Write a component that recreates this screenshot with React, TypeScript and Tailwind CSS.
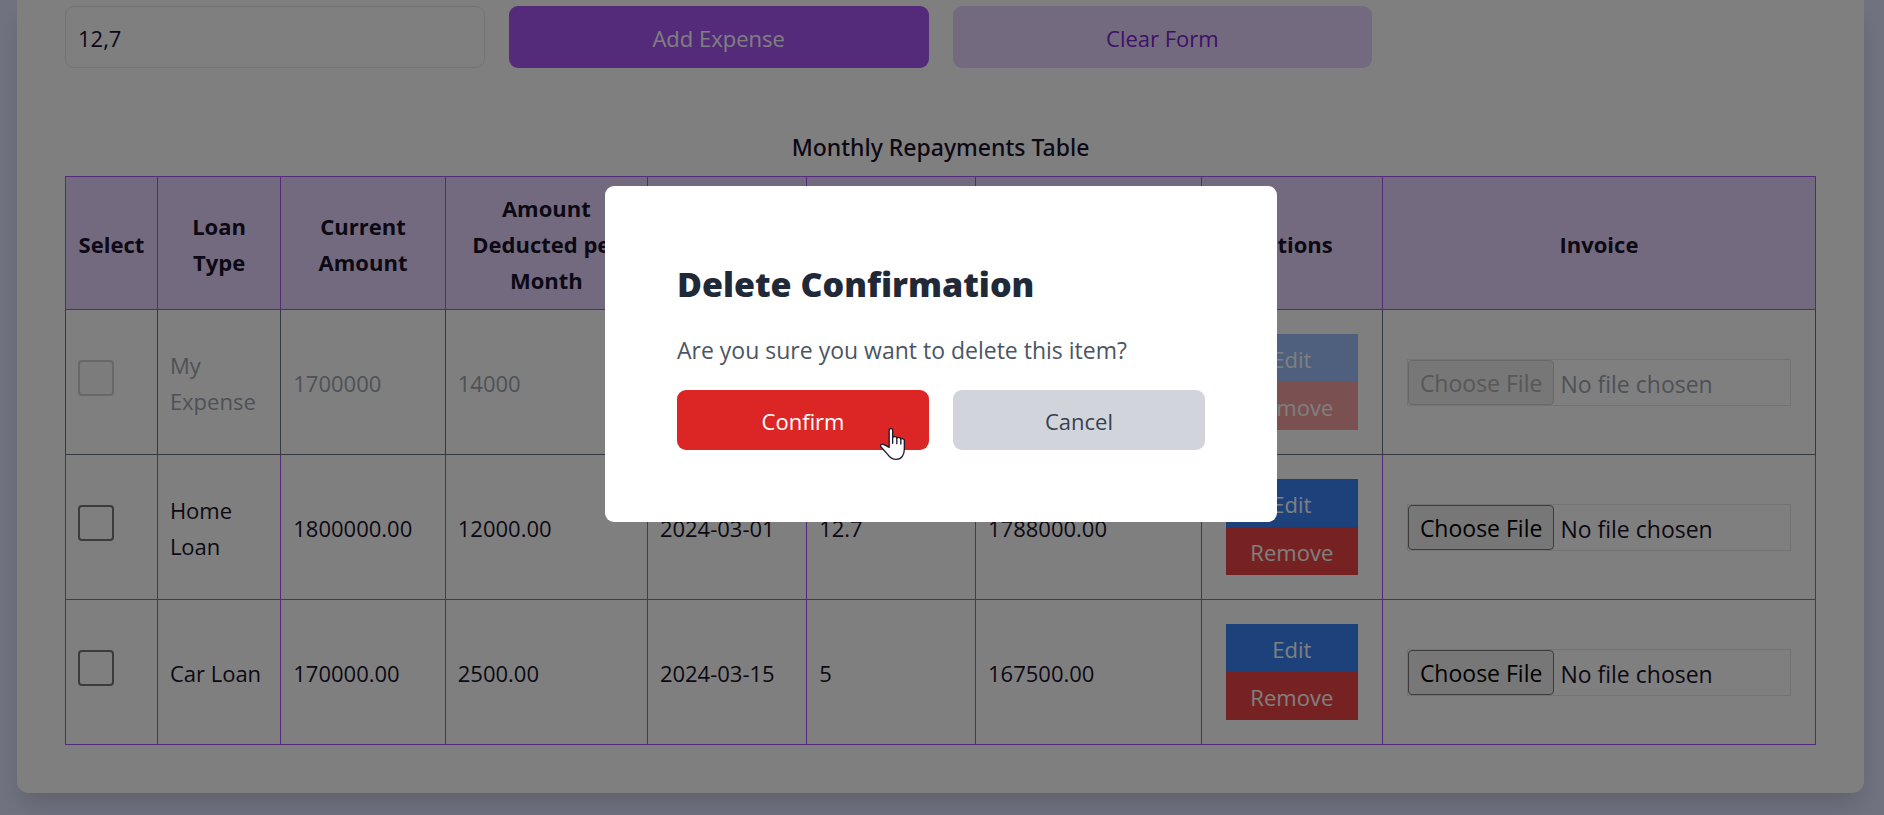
type Loan = {
  type: string;
  current: string;
  deducted: string;
  date: string;
  interest: string;
  balance: string;
  disabled?: boolean;
};

const loans: Loan[] = [
  { type: "My Expense", current: "1700000", deducted: "14000", date: "2024-03-01", interest: "12,7", balance: "1686000", disabled: true },
  { type: "Home Loan", current: "1800000.00", deducted: "12000.00", date: "2024-03-01", interest: "12.7", balance: "1788000.00" },
  { type: "Car Loan", current: "170000.00", deducted: "2500.00", date: "2024-03-15", interest: "5", balance: "167500.00" },
];

const headers = [
  "Select",
  "Loan Type",
  "Current Amount",
  "Amount Deducted per Month",
  "Date",
  "Interest Rate",
  "Balance",
  "Actions",
  "Invoice",
];

function LoanRow({ loan }: { loan: Loan }) {
  const cell = loan.disabled ? "border border-[#6b7280] px-3 pt-[2px]" : "border border-[#a855f7] px-3 pt-[2px]";
  const wide = loan.disabled ? "border border-[#6b7280] p-6" : "border border-[#a855f7] p-6";
  return (
    <tr className={loan.disabled ? "text-[#9ca3af]" : ""}>
      <td className={cell}>
        <input
          type="checkbox"
          aria-label={"Select " + loan.type}
          disabled={loan.disabled}
          className="mb-[10px] block size-9 appearance-none rounded-[4px] border-2 border-[#767676] bg-white disabled:border-[#d0d0d0] disabled:bg-[#f8f8f8]"
        />
      </td>
      <td className={cell}>{loan.type}</td>
      <td className={cell}>{loan.current}</td>
      <td className={cell}>{loan.deducted}</td>
      <td className={cell}>{loan.date}</td>
      <td className={cell}>{loan.interest}</td>
      <td className={cell}>{loan.balance}</td>
      <td className={wide}>
        <div className="flex flex-col">
          <button disabled={loan.disabled} className="h-12 bg-[#3b82f6] pt-[2px] text-white disabled:opacity-50">
            Edit
          </button>
          <button disabled={loan.disabled} className="h-12 bg-[#ef4444] pt-[2px] text-white disabled:opacity-50">
            Remove
          </button>
        </div>
      </td>
      <td className={wide}>
        <input
          type="file"
          aria-label={"Invoice for " + loan.type}
          disabled={loan.disabled}
          className="block w-full border border-[#e5e7eb] text-[23px] file:mr-[6px] file:h-[45px] file:rounded-[4px] file:border file:border-solid file:border-[#767676] file:bg-[#efefef] file:px-[11px] file:pt-[2px] file:text-black disabled:file:border-[#d0d0d0] disabled:file:text-[#b0b0b0]"
        />
      </td>
    </tr>
  );
}

function HandPointer() {
  return (
    <svg
      aria-hidden="true"
      viewBox="0 0 75 96"
      className="absolute top-[38px] right-[24px] h-8 w-[25px]"
      fill="white"
      stroke="#1a1a2a"
      strokeWidth="4"
      strokeLinejoin="round"
      strokeLinecap="round"
    >
      <path d="M27.500 58V7a5 5 0 0 1 10.500 0V28c3-4 12-3 12.500 2c3-3 11-2 12 3c4-2 10-1 10.500 4V64c0 16-8 30-24 30c-13 0-20-6-26-15L3 57c-4-6 3-11 9-7z" />
      <path d="M38 28V46M50.500 30V47M62.500 33V48" fill="none" />
    </svg>
  );
}

export default function App() {
  return (
    <div className="min-h-screen bg-[#e0e7ff] pr-5 pb-[22px] pl-[17px] font-['Open_Sans','Noto_Sans',sans-serif] text-[22px] leading-9 text-[#18122b]">
      <main className="rounded-b-xl bg-white px-12 pt-[6px] pb-12 shadow-[0_15px_23px_-4px_rgba(0,0,0,0.15)]">
        <form className="grid grid-cols-4 gap-6" onSubmit={(e) => e.preventDefault()}>
          <input
            aria-label="Interest rate"
            defaultValue="12,7"
            className="h-[62px] min-w-0 rounded-[9px] border border-[#e5e7eb] px-3 pt-[2px]"
          />
          <button type="button" className="h-[62px] rounded-[9px] bg-[#a855f7] pt-[2px] text-white">
            Add Expense
          </button>
          <button type="button" className="h-[62px] rounded-[9px] bg-[#e9d5ff] pt-[2px] text-[#7e22ce]">
            Clear Form
          </button>
        </form>

        <table className="mt-[61px] w-full table-fixed border-collapse">
          <caption className="pb-[11px] font-['Noto_Sans','Open_Sans',sans-serif] text-[23px] font-medium">
            Monthly Repayments Table
          </caption>
          <colgroup>
            <col className="w-[5.25%]" />
            <col className="w-[7.05%]" />
            <col className="w-[9.4%]" />
            <col className="w-[11.55%]" />
            <col className="w-[9.1%]" />
            <col className="w-[9.65%]" />
            <col className="w-[12.9%]" />
            <col className="w-[10.35%]" />
            <col />
          </colgroup>
          <thead>
            <tr>
              {headers.map((h) => (
                <th key={h} scope="col" className="border border-[#a855f7] bg-[#e9d5ff] px-2 pt-[13px] pb-[11px] font-bold">
                  {h}
                </th>
              ))}
            </tr>
          </thead>
          <tbody>
            {loans.map((loan) => (
              <LoanRow key={loan.type} loan={loan} />
            ))}
          </tbody>
        </table>
      </main>

      <div className="fixed inset-0 flex items-start justify-center bg-black/50 pt-[186px] pr-[2px]">
        <div role="dialog" aria-modal="true" aria-labelledby="dialog-title" className="w-[672px] rounded-[9px] bg-white p-[72px]">
          <h2 id="dialog-title" className="mb-[22px] text-[34px] leading-[52px] font-black whitespace-nowrap text-[#1f2937]">
            Delete Confirmation
          </h2>
          <p className="mb-[22px] text-[23px] text-[#4b5563]">Are you sure you want to delete this item?</p>
          <div className="grid grid-cols-2 gap-6">
            <button className="relative h-[60px] rounded-[9px] bg-[#dc2626] pt-[2px] text-white">
              Confirm
              <HandPointer />
            </button>
            <button className="h-[60px] rounded-[9px] bg-[#d1d5db] pt-[2px] text-[#374151]">Cancel</button>
          </div>
        </div>
      </div>
    </div>
  );
}
